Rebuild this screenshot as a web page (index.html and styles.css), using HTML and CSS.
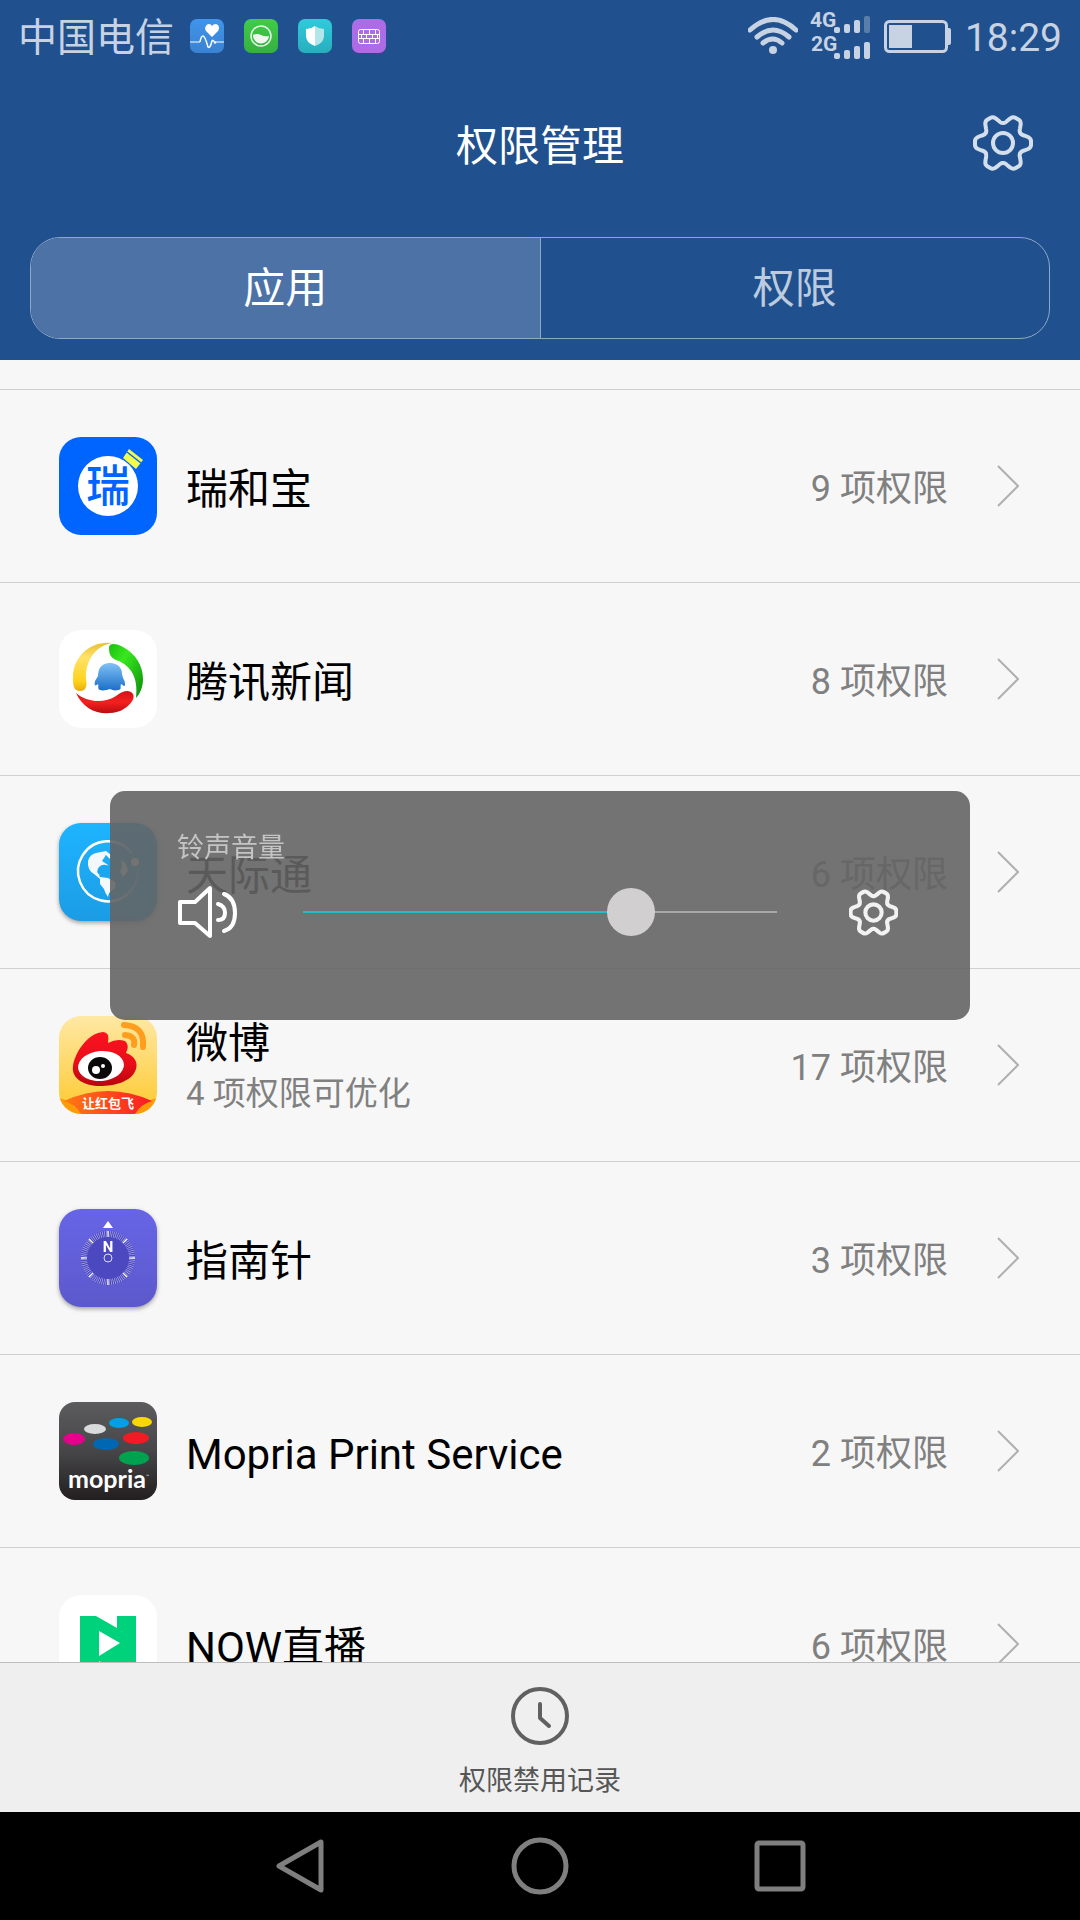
FILE: index.html
```html
<!DOCTYPE html>
<html lang="zh-CN">
  <head>
    <meta charset="utf-8">
    <meta name="viewport" content="width=device-width">
    <title>权限管理</title>
    <link rel="stylesheet" href="styles.css">
  </head>

  <body>
    <!-- shared shapes -->
    <svg class="defs" width="0" height="0" aria-hidden="true">
      <defs>
        <path id="tooth" d="M17.300 -10C18.300 -8 19.500 -8 21 -7.500L25 -6Q28 -4.500 28 -2V2Q28 4.500 25 6L21 7.500C19.500 8 18.300 8 17.300 10"/>
        <symbol id="gear" viewBox="-30 -30 60 60">
          <use href="#tooth"/>
          <use href="#tooth" transform="rotate(60)"/>
          <use href="#tooth" transform="rotate(120)"/>
          <use href="#tooth" transform="rotate(180)"/>
          <use href="#tooth" transform="rotate(240)"/>
          <use href="#tooth" transform="rotate(300)"/>
          <circle r="10"/>
        </symbol>
        <symbol id="chevron" viewBox="0 0 22 42"><path d="M1 1L21 21L1 41"/></symbol>
        <linearGradient id="blueTop" x2="0" y2="1"><stop stop-color="#4095ec"/><stop offset="1" stop-color="#3a82d2"/></linearGradient>
        <linearGradient id="greenTop" x2="0" y2="1"><stop stop-color="#40cc48"/><stop offset="1" stop-color="#36b040"/></linearGradient>
        <linearGradient id="tealTop" x2="0" y2="1"><stop stop-color="#2fcbdb"/><stop offset="1" stop-color="#29aebd"/></linearGradient>
        <linearGradient id="yellowArc" x2="0" y2="1"><stop stop-color="#e8c030"/><stop offset=".3" stop-color="#ffe26a"/><stop offset=".8" stop-color="#ffd21a"/><stop offset="1" stop-color="#e8ac10"/></linearGradient>
        <linearGradient id="greenArc" x2="1" y2="1"><stop stop-color="#1bbf10"/><stop offset=".35" stop-color="#38e81e"/><stop offset="1" stop-color="#0b8a0c"/></linearGradient>
        <linearGradient id="redArc" x2="0" y2="1"><stop stop-color="#d01515"/><stop offset=".5" stop-color="#f52020"/><stop offset="1" stop-color="#b80c10"/></linearGradient>
        <linearGradient id="penguin" x2="0" y2="1"><stop stop-color="#7fc2f5"/><stop offset="1" stop-color="#1c6fc8"/></linearGradient>
        <linearGradient id="sky" x2="0" y2="1"><stop stop-color="#1eb4ff"/><stop offset="1" stop-color="#1b9ce4"/></linearGradient>
        <linearGradient id="orbit" x1="0" y1="0" x2="1" y2="0"><stop offset=".5" stop-color="#fff"/><stop offset="1" stop-color="#fff" stop-opacity=".2"/></linearGradient>
        <linearGradient id="sand" x2="0" y2="1"><stop stop-color="#fee8a4"/><stop offset="1" stop-color="#fec92e"/></linearGradient>
        <linearGradient id="flame" x2="0" y2="1"><stop stop-color="#fb1420"/><stop offset=".6" stop-color="#e80c18"/><stop offset="1" stop-color="#b8060e"/></linearGradient>
        <linearGradient id="ribbon"><stop stop-color="#ff7a12"/><stop offset=".5" stop-color="#ff4a1c"/><stop offset="1" stop-color="#f81a26"/></linearGradient>
        <linearGradient id="violet" x2="0" y2="1"><stop stop-color="#6765e6"/><stop offset="1" stop-color="#5c59cc"/></linearGradient>
        <linearGradient id="coal" x2="0" y2="1"><stop stop-color="#5c5c5e"/><stop offset=".5" stop-color="#464648"/><stop offset="1" stop-color="#231f20"/></linearGradient>
        <clipPath id="tile"><rect width="98" height="98" rx="22"/></clipPath>
      </defs>
    </svg>

    <header class="header">
      <div class="status">
        <span class="carrier">中国电信</span>
        <svg class="notice" viewBox="0 0 34 34">
          <rect width="34" height="34" rx="7" fill="url(#blueTop)"/>
          <path d="M0 23H10M25 23H34" stroke="#9cc3ee" stroke-width="2"/>
          <path d="M22 18L16 12C14 9 16 5 19 5Q21 5 22 7Q23 5 26 5C29 6 30 9 28 12Z" fill="#fff"/>
          <path d="M10 23Q11 17 13 17Q15 17 18 28Q20 30 22 22Q23 20 25 24L26 23" fill="none" stroke="#fff" stroke-width="1.500"/>
        </svg>
        <svg class="notice" viewBox="0 0 34 34">
          <rect width="34" height="34" rx="7" fill="url(#greenTop)"/>
          <circle cx="17" cy="17" r="10" fill="none" stroke="#e4f6e5" stroke-width="1.500"/>
          <path d="M9 16Q13 14 17 16T25 17A8 8 0 0 1 9 16Z" fill="#f0f5f0"/>
        </svg>
        <svg class="notice" viewBox="0 0 34 34">
          <rect width="34" height="34" rx="7" fill="url(#tealTop)"/>
          <path d="M17 7Q13 10 8 10V17Q8 24 17 27Z" fill="#fff"/>
          <path d="M17 7Q21 10 26 10V17Q26 24 17 27Z" fill="#b4e5e8"/>
        </svg>
        <svg class="notice" viewBox="0 0 34 34">
          <rect width="34" height="34" rx="7" fill="#ad6ce6"/>
          <g fill="none" stroke="#fff" stroke-width="1"><rect x="6.500" y="10.500" width="21" height="14" rx="2"/><path d="M6 15.500H28M6 19.500H28M11.500 10V15M17.500 10V15M23.500 10V15M9.500 15V20M14.500 15V20M20.500 15V20M25.500 15V20M11.500 20V25M17.500 20V25M23.500 20V25"/></g>
        </svg>

        <div class="status-right">
          <svg class="wifi" viewBox="0 0 50 38">
            <path d="M2 13Q25 -8 48 13M9 20Q25 6 41 20M15 26Q25 18 34 26"/>
            <circle cx="25" cy="33" r="4"/>
          </svg>
          <svg class="signal" viewBox="0 0 62 50">
            <text x="0" y="16">4G</text>
            <text x="1" y="40">2G</text>
            <rect x="24" y="16" width="6" height="6" rx="2"/>
            <rect x="34" y="13" width="6" height="9" rx="2"/>
            <rect x="44" y="9" width="6" height="13" rx="2"/>
            <rect class="weak" x="54" y="5" width="6" height="17" rx="2"/>
            <rect x="24" y="42" width="6" height="6" rx="2"/>
            <rect x="34" y="39" width="6" height="9" rx="2"/>
            <rect x="44" y="35" width="6" height="13" rx="2"/>
            <rect x="54" y="31" width="6" height="17" rx="2"/>
          </svg>
          <svg class="battery" viewBox="0 0 67 33">
            <rect x="1.500" y="1.500" width="61" height="30" rx="4" fill="none" stroke="#c7d3e3" stroke-width="3"/>
            <rect x="5" y="5" width="23" height="23"/>
            <path d="M63 8H65Q67 8 67 10V23Q67 25 65 25H63Z"/>
          </svg>
          <time class="clock">18:29</time>
        </div>
      </div>

      <div class="title-bar">
        <h1>权限管理</h1>
        <button class="gear-btn" aria-label="设置"><svg class="gear"><use href="#gear"/></svg></button>
      </div>

      <div class="tabs" role="tablist">
        <button class="tab active" role="tab" aria-selected="true">应用</button>
        <button class="tab" role="tab" aria-selected="false">权限</button>
      </div>
    </header>

    <main class="content">
      <ul class="app-list">
        <li>
          <a class="app" href="#">
            <svg class="app-icon" viewBox="0 0 98 98">
              <rect width="98" height="98" rx="22" fill="#0065ff"/>
              <path d="M70 12L84 23L77 32L64 21Z" fill="#f4fb4a"/>
              <path d="M68 15L82 26" stroke="#0065ff" stroke-width="1.500"/>
              <circle cx="49" cy="49" r="30" fill="#fff"/>
              <text class="rui" x="49" y="65">瑞</text>
            </svg>
            <span class="app-name">瑞和宝</span>
            <span class="count">9 项权限</span>
            <svg class="chevron"><use href="#chevron"/></svg>
          </a>
        </li>
        <li>
          <a class="app" href="#">
            <svg class="app-icon" viewBox="0 0 98 98">
              <rect width="98" height="98" rx="22" fill="#fff"/>
              <path d="M53 13C30 11 14 28 14 47C14 54 14 61 21 61C28 61 28 55 27 49C26 33 35 16 53 13Z" fill="url(#yellowArc)"/>
              <path d="M50 18C50 12 58 14 64 17C77 24 84 36 84 49C84 57 81 64 77 68C79 52 75 38 60 31C53 29 50 26 50 18Z" fill="url(#greenArc)"/>
              <path d="M17 63C27 72 45 74 57 66C64 61 70 59 74 64C77 70 68 78 61 81C43 87 25 81 17 63Z" fill="url(#redArc)"/>
              <path d="M51 33C59 33 63 38 63 44L64 48C66 51 67 56 65 56L62 54C61 57 63 60 59 60C56 61 53 60 51 59C48 60 44 61 41 60C38 59 40 56 39 54C36 57 35 55 36 51L39 46C39 38 43 33 51 33Z" fill="url(#penguin)"/>
            </svg>
            <span class="app-name">腾讯新闻</span>
            <span class="count">8 项权限</span>
            <svg class="chevron"><use href="#chevron"/></svg>
          </a>
        </li>
        <li>
          <a class="app" href="#">
            <svg class="app-icon shadow" viewBox="0 0 98 98">
              <rect width="98" height="98" rx="22" fill="url(#sky)"/>
              <path d="M72 29A30 30 0 1 0 79 47" fill="none" stroke="url(#orbit)" stroke-width="2.500" stroke-linecap="round"/>
              <circle cx="76" cy="39" r="4" fill="#fff"/>
              <path d="M29 38Q31 31 37 30L47 28L52 32L51 36L47 32L43 38L49 42L50 50L40 52L41 54L49 55L56 59Q58 62 55 66L50 70L49 74Q46 70 45 66L41 61V56L35 51Q28 47 29 38Z" fill="#f2f8fc"/>
              <path d="M40 44Q44 40 50 43L53 50Q48 54 41 52Q36 49 40 44Z" fill="#1ca6f0"/>
              <path d="M62 37L67 41L69 48L64 54L61 49L63 43Z" fill="#f2f8fc"/>
            </svg>
            <span class="app-name">天际通</span>
            <span class="count">6 项权限</span>
            <svg class="chevron"><use href="#chevron"/></svg>
          </a>
        </li>
        <li>
          <a class="app" href="#">
            <svg class="app-icon" viewBox="0 0 98 98">
              <g clip-path="url(#tile)">
                <rect width="98" height="98" fill="url(#sand)"/>
                <path d="M65 9Q86 10 84 31M66 19Q77 20 75 29" fill="none" stroke="#ff9e1e" stroke-width="6" stroke-linecap="round"/>
                <path d="M14 50C16 36 29 17 44 16Q51 16 49 27Q58 22 66 25Q71 29 67 37C76 40 79 47 77 53C73 66 55 70 41 70C26 70 12 63 14 50Z" fill="url(#flame)"/>
                <ellipse cx="42" cy="50" rx="23" ry="15" fill="#fff" transform="rotate(-5 42 50)"/>
                <ellipse cx="41" cy="52" rx="12" ry="11" fill="#0a0a0a"/>
                <circle cx="37" cy="54" r="4" fill="#fff"/>
                <circle cx="44" cy="50" r="2" fill="#fff"/>
                <path d="M0 82Q12 84 22 98H0ZM98 82Q86 84 76 98H98Z" fill="#ff9a08"/>
                <path d="M5 85Q49 65 93 85Q82 88 76 98H22Q16 88 5 85Z" fill="url(#ribbon)"/>
                <text class="fly" x="49" y="92">让红包飞</text>
              </g>
            </svg>
            <span class="app-name">微博<small>4 项权限可优化</small></span>
            <span class="count">17 项权限</span>
            <svg class="chevron"><use href="#chevron"/></svg>
          </a>
        </li>
        <li>
          <a class="app" href="#">
            <svg class="app-icon shadow" viewBox="0 0 98 98">
              <rect width="98" height="98" rx="22" fill="url(#violet)"/>
              <circle cx="49" cy="49" r="27" fill="#4c49c0"/>
              <circle cx="49" cy="49" r="24" fill="none" stroke="#b6b5ea" stroke-width="6" pathLength="240" stroke-dasharray="1 2"/>
              <circle cx="49" cy="49" r="24" fill="none" stroke="#fff" stroke-width="6" pathLength="240" stroke-dasharray="2 28" stroke-dashoffset="1"/>
              <path d="M49 12L54 19H44Z" fill="#fff"/>
              <text class="north" x="49" y="43">N</text>
              <circle cx="49" cy="49" r="4" fill="none" stroke="#dddcf5"/>
            </svg>
            <span class="app-name">指南针</span>
            <span class="count">3 项权限</span>
            <svg class="chevron"><use href="#chevron"/></svg>
          </a>
        </li>
        <li>
          <a class="app" href="#">
            <svg class="app-icon" viewBox="0 0 98 98">
              <rect width="98" height="98" rx="16" fill="url(#coal)"/>
              <ellipse cx="36" cy="27" rx="11" ry="5" fill="#d8dadc"/>
              <ellipse cx="60" cy="21" rx="10" ry="5" fill="#00a0e4"/>
              <ellipse cx="83" cy="20" rx="10" ry="5" fill="#f8d800"/>
              <ellipse cx="15" cy="37" rx="11" ry="6" fill="#e6008c"/>
              <ellipse cx="47" cy="42" rx="13" ry="6" fill="#0068b2"/>
              <ellipse cx="77" cy="36" rx="13" ry="6" fill="#ee1c24"/>
              <ellipse cx="75" cy="56" rx="15" ry="7" fill="#00a250"/>
              <text class="mopria" x="48" y="86">mopria</text>
              <text class="tm" x="87" y="76">™</text>
            </svg>
            <span class="app-name">Mopria Print Service</span>
            <span class="count">2 项权限</span>
            <svg class="chevron"><use href="#chevron"/></svg>
          </a>
        </li>
        <li>
          <a class="app" href="#">
            <svg class="app-icon" viewBox="0 0 98 98">
              <rect width="98" height="98" rx="22" fill="#fff"/>
              <path d="M21 21H37L58 33V21H77V77H60L40 66V77H21Z" fill="#00d27c"/>
              <path d="M40 36L61 48L40 61Z" fill="#fff"/>
            </svg>
            <span class="app-name">NOW直播</span>
            <span class="count">6 项权限</span>
            <svg class="chevron"><use href="#chevron"/></svg>
          </a>
        </li>
      </ul>
    </main>

    <footer class="toolbar">
      <button class="record-btn">
        <svg class="record-icon" viewBox="0 0 58 58"><circle cx="29" cy="29" r="27"/><path d="M29 17V31L38 39"/></svg>
        权限禁用记录
      </button>
    </footer>

    <nav class="nav">
      <button aria-label="返回"><svg viewBox="0 0 60 60"><path d="M51 6V54L9 30Z"/></svg></button>
      <button aria-label="主页"><svg viewBox="0 0 60 60"><circle cx="30" cy="30" r="26"/></svg></button>
      <button aria-label="最近任务"><svg viewBox="0 0 60 60"><rect x="7" y="7" width="46" height="46" rx="2"/></svg></button>
    </nav>

    <!-- volume popup -->
    <div class="volume">
      <label for="ring">铃声音量</label>
      <div class="volume-row">
        <svg class="speaker" viewBox="0 0 60 54">
          <path d="M3 17H18L33 3V51L18 38H3Z"/>
          <path d="M41 19Q48 21 48 28T41 35M47 9Q58 13 58 28T47 46"/>
        </svg>
        <input class="slider" type="range" id="ring" min="0" max="7" value="5">
        <button class="gear-btn" aria-label="声音设置"><svg class="gear small"><use href="#gear"/></svg></button>
      </div>
    </div>
  </body>
</html>
```

FILE: styles.css
```css
* {
  box-sizing: border-box;
}
body {
  margin: 0;
  height: 100vh;
  display: flex;
  flex-direction: column;
  background: #f7f7f7;
  color: #000;
  font-family: Roboto, "Noto Sans CJK SC", sans-serif;
  overflow: hidden;
}
svg {
  display: block;
  flex: none;
}
button {
  border: 0;
  padding: 0;
  background: none;
  font-family: inherit;
  cursor: pointer;
}
.defs {
  position: absolute;
}

/* header */
.header {
  background: #20508d;
  padding-bottom: 21px;
}
.status {
  display: flex;
  align-items: center;
  gap: 20px;
  height: 72px;
  padding: 0 18px;
  color: #c7d3e3;
}
.carrier {
  font-size: 39px;
  line-height: 68px;
  padding-top: 4px;
  margin-right: -4px;
}
.notice {
  width: 34px;
  height: 34px;
}
.status-right {
  display: flex;
  align-items: center;
  gap: 12px;
  margin-left: auto;
  fill: #c7d3e3;
}
.wifi {
  width: 50px;
  height: 38px;
}
.wifi path {
  fill: none;
  stroke: #c7d3e3;
  stroke-width: 5px;
  stroke-linecap: round;
}
.signal {
  width: 62px;
  height: 50px;
  font-size: 21px;
  font-weight: 700;
  overflow: visible;
}
.weak {
  opacity: 0.35;
}
.battery {
  width: 67px;
  height: 33px;
}
.clock {
  font-size: 39px;
  line-height: 68px;
  padding-top: 4px;
  margin-left: 2px;
}
.title-bar {
  display: grid;
  grid-template-columns: 1fr auto 1fr;
  align-items: center;
  height: 141px;
  padding: 0 47px;
}
.title-bar h1 {
  grid-column: 2;
  margin: 0;
  color: #fff;
  font-size: 42px;
  font-weight: 400;
}
.title-bar .gear-btn {
  justify-self: end;
}
.gear {
  width: 60px;
  height: 60px;
  fill: none;
  stroke: #d5dfec;
  stroke-width: 4px;
  stroke-linecap: round;
}
.gear.small {
  width: 49px;
  height: 49px;
  stroke: #f2f2f2;
  stroke-width: 5px;
}
.tabs {
  display: flex;
  height: 102px;
  margin: 24px 30px 0;
  border: 1px solid #8fa8c8;
  border-radius: 30px;
  overflow: hidden;
}
.tab {
  flex: 1;
  padding-bottom: 8px;
  color: #bccbdd;
  font-size: 42px;
}
.tab.active {
  background: #4d73a6;
  color: #fff;
  border-right: 1px solid #8fa8c8;
}

/* list */
.content {
  flex: 1;
  min-height: 0;
  overflow: hidden;
  padding-top: 29px;
}
.app-list {
  list-style: none;
  margin: 0;
  padding: 0;
}
.app {
  display: flex;
  align-items: center;
  height: 193px;
  padding: 0 61px 0 59px;
  border-top: 1px solid #cfcfcf;
  color: #000;
  text-decoration: none;
}
.app-icon {
  width: 98px;
  height: 98px;
  margin-right: 29px;
}
.shadow {
  filter: drop-shadow(0 2px 2px rgba(0, 0, 0, 0.35));
}
.app-name {
  flex: 1;
  padding-top: 7px;
  font-size: 42px;
  line-height: 50px;
}
.app-name small {
  display: block;
  color: #808080;
  font-size: 33px;
}
.count {
  padding-bottom: 2px;
  color: #808080;
  font-size: 36px;
}
.chevron {
  width: 22px;
  height: 42px;
  margin-left: 49px;
  fill: none;
  stroke: #b0b0b0;
  stroke-width: 2px;
}
.rui {
  fill: #0065ff;
  font-size: 44px;
  font-weight: 500;
  text-anchor: middle;
}
.fly {
  fill: #fff;
  font-size: 13px;
  font-weight: 700;
  text-anchor: middle;
}
.north {
  fill: #fff;
  font-size: 15px;
  font-weight: 700;
  text-anchor: middle;
}
.mopria {
  fill: #fff;
  font-family: Lato, sans-serif;
  font-size: 25px;
  font-weight: 700;
  text-anchor: middle;
}
.tm {
  fill: #fff;
  font-size: 5px;
}

/* bottom */
.toolbar {
  display: flex;
  justify-content: center;
  height: 150px;
  background: #efefef;
  border-top: 1px solid #bdbdbd;
}
.record-btn {
  display: flex;
  flex-direction: column;
  align-items: center;
  padding-top: 24px;
  gap: 16px;
  color: #565656;
  font-size: 27px;
  line-height: 40px;
}
.record-icon {
  width: 58px;
  height: 58px;
  fill: none;
  stroke: #606060;
  stroke-width: 4px;
  stroke-linecap: round;
  stroke-linejoin: round;
}
.nav {
  display: flex;
  justify-content: center;
  gap: 180px;
  height: 108px;
  background: #000;
}
.nav svg {
  width: 60px;
  height: 60px;
  fill: none;
  stroke: #7f7f7f;
  stroke-width: 5px;
  stroke-linejoin: round;
}

/* volume popup */
.volume {
  position: fixed;
  top: 791px;
  left: 110px;
  right: 110px;
  height: 229px;
  padding: 37px 72px 0 67px;
  border-radius: 15px;
  background: rgba(100, 100, 100, 0.9);
}
.volume label {
  display: block;
  color: #c4c4c4;
  font-size: 27px;
  line-height: 40px;
}
.volume-row {
  display: flex;
  align-items: center;
  height: 88px;
}
.speaker {
  width: 60px;
  height: 54px;
  fill: none;
  stroke: #fff;
  stroke-width: 4px;
  stroke-linecap: round;
  stroke-linejoin: round;
}
.slider {
  flex: 1;
  appearance: none;
  min-width: 0;
  height: 48px;
  margin: 0 72px 0 66px;
  background: linear-gradient(to right, #24bcc8 70%, #a8a8a8 70%) center / 100% 2px no-repeat;
}
.slider::-webkit-slider-thumb {
  appearance: none;
  width: 48px;
  height: 48px;
  border-radius: 50%;
  background: #d1cfd0;
}
```
